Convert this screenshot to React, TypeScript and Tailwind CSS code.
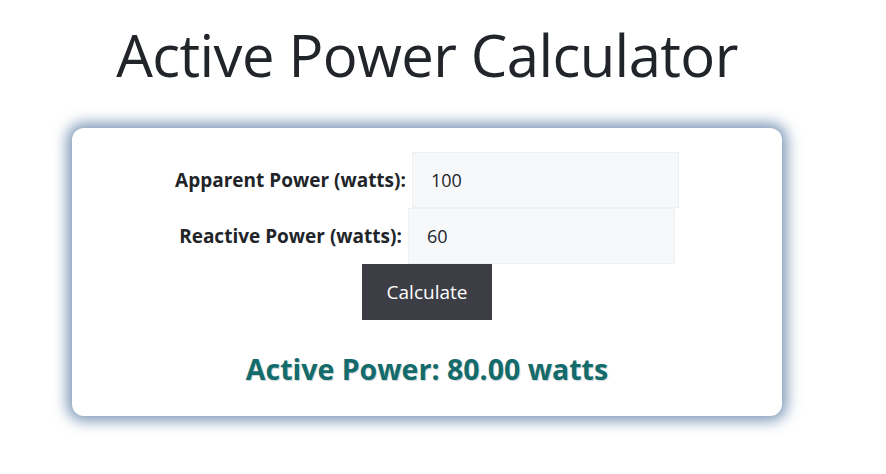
import { useState } from "react";

const font = { fontFamily: '"Open Sans", "Noto Sans", sans-serif' };

export default function App() {
  const [apparent, setApparent] = useState("100");
  const [reactive, setReactive] = useState("60");
  const [result, setResult] = useState<number | null>(80);

  const calc = () => {
    const s = parseFloat(apparent);
    const q = parseFloat(reactive);
    if (isNaN(s) || isNaN(q)) return setResult(null);
    setResult(Math.sqrt(Math.max(s * s - q * q, 0)));
  };

  return (
    <div className="min-h-screen bg-white text-[#212529]" style={font}>
      <div className="w-[854px] flex flex-col items-center">
        <h1 className="mt-[20px] text-[58px] leading-[70px] font-normal tracking-[-0.6px]">Active Power Calculator</h1>
        <div className="mt-[38px] w-[710px] h-[288px] rounded-xl bg-white shadow-[0_0_14px_5px_rgba(105,135,172,0.85)] flex flex-col items-center pt-6">
          <div className="flex items-center gap-[6px]">
            <label className="text-[19px] font-bold">Apparent Power (watts):</label>
            <input
              value={apparent}
              onChange={(e) => setApparent(e.target.value)}
              className="w-[267px] h-[56px] bg-[#f7f8fa] border border-[#eeeff1] pl-[18px] text-[18px] outline-none"
            />
          </div>
          <div className="flex items-center gap-[6px]">
            <label className="text-[19px] font-bold">Reactive Power (watts):</label>
            <input
              value={reactive}
              onChange={(e) => setReactive(e.target.value)}
              className="w-[267px] h-[56px] bg-[#f7f8fa] border border-[#eeeff1] pl-[18px] text-[18px] outline-none"
            />
          </div>
          <button onClick={calc} className="w-[130px] h-[56px] bg-[#3d3d45] text-white text-[19px]">
            Calculate
          </button>
          {result !== null && (
            <p className="mt-[29px] text-[28.5px] leading-[40px] font-bold text-[#146b6c] [text-shadow:1px_1px_1px_#c9d3d3]">
              Active Power: {result.toFixed(2)} watts
            </p>
          )}
        </div>
      </div>
    </div>
  );
}
